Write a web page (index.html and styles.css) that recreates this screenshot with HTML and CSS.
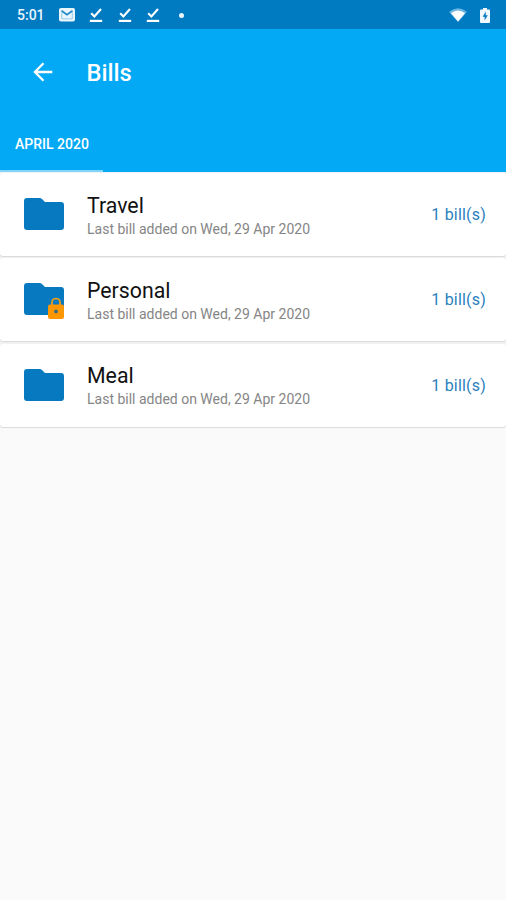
FILE: index.html
```html
<!DOCTYPE html>
<html lang="en">
<head>
<meta charset="utf-8">
<title>Bills</title>
<link rel="stylesheet" href="styles.css">
</head>
<body>
<svg class="defs" width="0" height="0" aria-hidden="true">
  <symbol id="folder" viewBox="0 0 40 32"><path d="M3 0h12.500q1.500 0 2.500 1l3 3h16a3 3 0 0 1 3 3v22a3 3 0 0 1-3 3H3a3 3 0 0 1-3-3V3a3 3 0 0 1 3-3z"/></symbol>
  <symbol id="done" viewBox="0 0 14 16"><path d="M2.2 6.2l3.2 3.3 6.6-7.5" fill="none" stroke="currentColor" stroke-width="2.1"/><path d="M.8 12.8h12.4v2.2H.8z" fill="currentColor"/></symbol>
</svg>
<div class="status">
  <span class="clock">5:01</span>
  <svg class="mail" width="16" height="14" viewBox="0 0 16 14"><rect width="16" height="13.500" rx="2" fill="#e8f5fd"/><path d="M2.500 2.800L8 6.600l5.500-3.800" fill="none" stroke="#2588c8" stroke-width="1.700"/><path d="M2.700 4.500v6.300h10.600V4.500" fill="none" stroke="#9ccbe8" stroke-width="1"/></svg>
  <svg class="done" width="14" height="16"><use href="#done"/></svg>
  <svg class="done" width="14" height="16"><use href="#done"/></svg>
  <svg class="done" width="14" height="16"><use href="#done"/></svg>
  <span class="dot"></span>
  <svg class="wifi" width="18" height="14" viewBox="0 0 18 14"><path d="M0 3.800Q9-3.200 18 3.800L9 14z" fill="#6bb5e1"/><path d="M2 5.200Q9 0 16 5.200L9 13.500z" fill="#fff"/></svg>
  <svg class="battery" width="10" height="15" viewBox="0 0 10 15"><path d="M3 0h4v1.500h2q1 0 1 1V14q0 1-1 1H1q-1 0-1-1V2.500q0-1 1-1h2z" fill="#f3faff"/><path d="M5.800 3.500L2.600 8.800h2v3.700l3.200-5.300h-2z" fill="#0a7bc4"/></svg>
</div>
<header class="header">
  <div class="toolbar">
    <svg class="back" width="20" height="20" viewBox="0 0 20 20"><path d="M19.300 10H2M10.500 1.200L1.900 10l8.600 8.800" fill="none" stroke="#fff" stroke-width="2.300"/></svg>
    <h1>Bills</h1>
  </div>
  <nav class="tabs"><span class="tab">APRIL 2020</span></nav>
</header>
<main class="list">
  <article class="row">
    <div class="icon"><svg class="folder" width="40" height="32"><use href="#folder"/></svg></div>
    <div class="info"><h2>Travel</h2><p>Last bill added on Wed, 29 Apr 2020</p></div>
    <span class="count">1 bill(s)</span>
  </article>
  <article class="row">
    <div class="icon"><svg class="folder" width="40" height="32"><use href="#folder"/></svg>
      <svg class="lock" width="16" height="22" viewBox="0 0 16 22"><path d="M4 9V5.500a4 4 0 0 1 8 0V9" fill="none" stroke="#f9a010" stroke-width="1.700"/><rect y="7.500" width="16" height="14.500" rx="2" fill="#ff9800"/><circle cx="8" cy="14.500" r="1.900" fill="#3b6b80"/></svg>
    </div>
    <div class="info"><h2>Personal</h2><p>Last bill added on Wed, 29 Apr 2020</p></div>
    <span class="count">1 bill(s)</span>
  </article>
  <article class="row">
    <div class="icon"><svg class="folder" width="40" height="32"><use href="#folder"/></svg></div>
    <div class="info"><h2>Meal</h2><p>Last bill added on Wed, 29 Apr 2020</p></div>
    <span class="count">1 bill(s)</span>
  </article>
</main>
</body>
</html>
```
FILE: styles.css
```css
* { box-sizing: border-box; }
body { margin: 0; min-height: 900px; background: #fafafa; font-family: Roboto, "Liberation Sans", sans-serif; }
h1, h2, p { margin: 0; }
.defs { display: none; }
.status { display: flex; align-items: center; height: 29px; padding: 1px 16px 0 17px; background: #007ac1; color: #fff; }
.clock { width: 42px; font-size: 14px; font-weight: 500; line-height: 28px; color: #e8f5fd; }
.mail { margin-right: 14px; }
.done { margin-right: 14.500px; margin-top: -1px; }
.dot { width: 5px; height: 5px; margin-left: 4px; border-radius: 50%; background: #e8f5fd; }
.wifi { margin-left: auto; margin-right: 13px; }
.header { height: 143px; background: #03a9f4; color: #fff; }
.toolbar { display: flex; align-items: center; height: 87px; padding-left: 33px; }
.back { margin: -1px 33.500px 0 0; }
.toolbar h1 { font-size: 23.700px; font-weight: 500; line-height: 30px; }
.tabs { display: flex; height: 56px; }
.tab { width: 103px; padding: 18px 0 0 15px; border-bottom: 2px solid #81d4fa; font-size: 14px; font-weight: 500; line-height: 20px; white-space: nowrap; }
.list { padding-top: 1px; background: #f2f2f2; }
.row { display: flex; align-items: center; height: 83px; margin-bottom: 2.300px; padding: 0 20px 0 24px; border-radius: 3px; background: #fff; box-shadow: 0 1px 1px #d9d9d9; }
.row:last-child { margin-bottom: 0; }
.icon { position: relative; width: 40px; height: 32px; margin: -1px 23px 0 0; }
.folder { display: block; fill: #0779c0; }
.lock { position: absolute; left: 24px; top: 14px; }
.info { flex: 1; padding-top: 2px; }
.info h2 { font-size: 21.300px; font-weight: 400; line-height: 26px; color: #111; }
.info p { font-size: 14px; line-height: 20px; color: #858585; }
.count { margin-top: 1px; font-size: 16px; letter-spacing: .2px; line-height: 20px; color: #2b7fbd; }
```
